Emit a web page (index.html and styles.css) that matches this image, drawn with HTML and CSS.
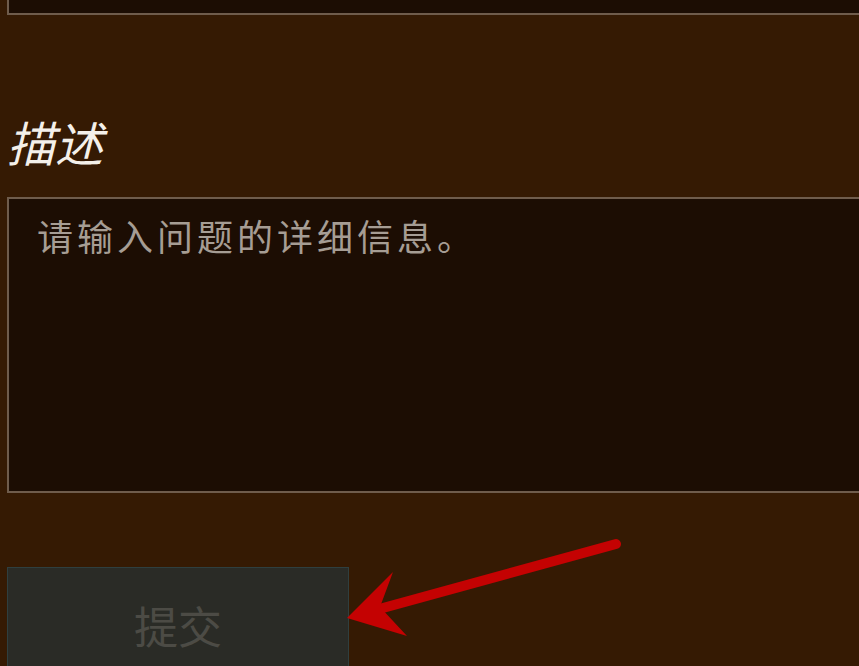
FILE: index.html
```html
<!DOCTYPE html>
<html lang="zh">
<head>
  <meta charset="UTF-8" />
  <title>提交问题</title>
  <link rel="stylesheet" href="styles.css">
</head>
<body>
  <main class="form">
    <div class="form__group form__group--top">
      <input class="form__input" type="text" name="title" />
    </div>

    <div class="form__group">
      <label class="form__label" for="description">描述</label>
      <textarea class="form__textarea" id="description" name="description" placeholder="请输入问题的详细信息。"></textarea>
    </div>

    <div class="form__footer">
      <button type="submit" class="form__btn" disabled>提交</button>
    </div>

    <svg class="arrow" width="859" height="666" viewBox="0 0 859 666">
      <line x1="616" y1="544" x2="372" y2="611" stroke="#c40202" stroke-width="10" stroke-linecap="round" />
      <polygon points="347,618 393,572 380,607 407,636" fill="#c40202" />
    </svg>
  </main>
</body>
</html>
```

FILE: styles.css
```css
html, body {
  margin: 0;
  height: 100%;
  overflow: hidden;
}

body {
  background-color: #351a03;
  font-family: "Noto Sans CJK SC", "Noto Sans", sans-serif;
  color: #f0ece6;
}

.form {
  position: relative;
  display: flow-root;
  height: 666px;
  padding-left: 7px;
}

.form__group--top {
  margin-top: -26px;
}

.form__input {
  display: block;
  box-sizing: border-box;
  width: 100%;
  height: 41px;
  margin: 0;
  background-color: #1c0d03;
  border: 2px solid #6f5c4c;
  border-right: 0;
}

.form__label {
  display: block;
  margin-top: 95px;
  height: 87px;
  font-size: 48px;
  font-style: italic;
  line-height: 62px;
  color: #f4f0ea;
}

.form__textarea {
  display: block;
  box-sizing: border-box;
  width: 100%;
  height: 296px;
  margin: 0;
  padding: 11px 28px;
  background-color: #1c0d03;
  border: 2px solid #6f5c4c;
  border-right: 0;
  font-family: "Noto Sans CJK SC", sans-serif;
  font-size: 36px;
  letter-spacing: 4px;
  line-height: 1.4;
  resize: none;
}

.form__textarea::placeholder {
  color: #a69d94;
}

.form__footer {
  margin-top: 74px;
}

.form__btn {
  box-sizing: border-box;
  width: 342px;
  height: 116px;
  background-color: #2a2b26;
  border: 1px solid #2f3f3f;
  color: #4c4b45;
  font-family: "Noto Sans CJK SC", sans-serif;
  font-size: 44px;
  padding: 0;
}

.arrow {
  position: absolute;
  top: 0;
  left: 0;
  pointer-events: none;
}
```
